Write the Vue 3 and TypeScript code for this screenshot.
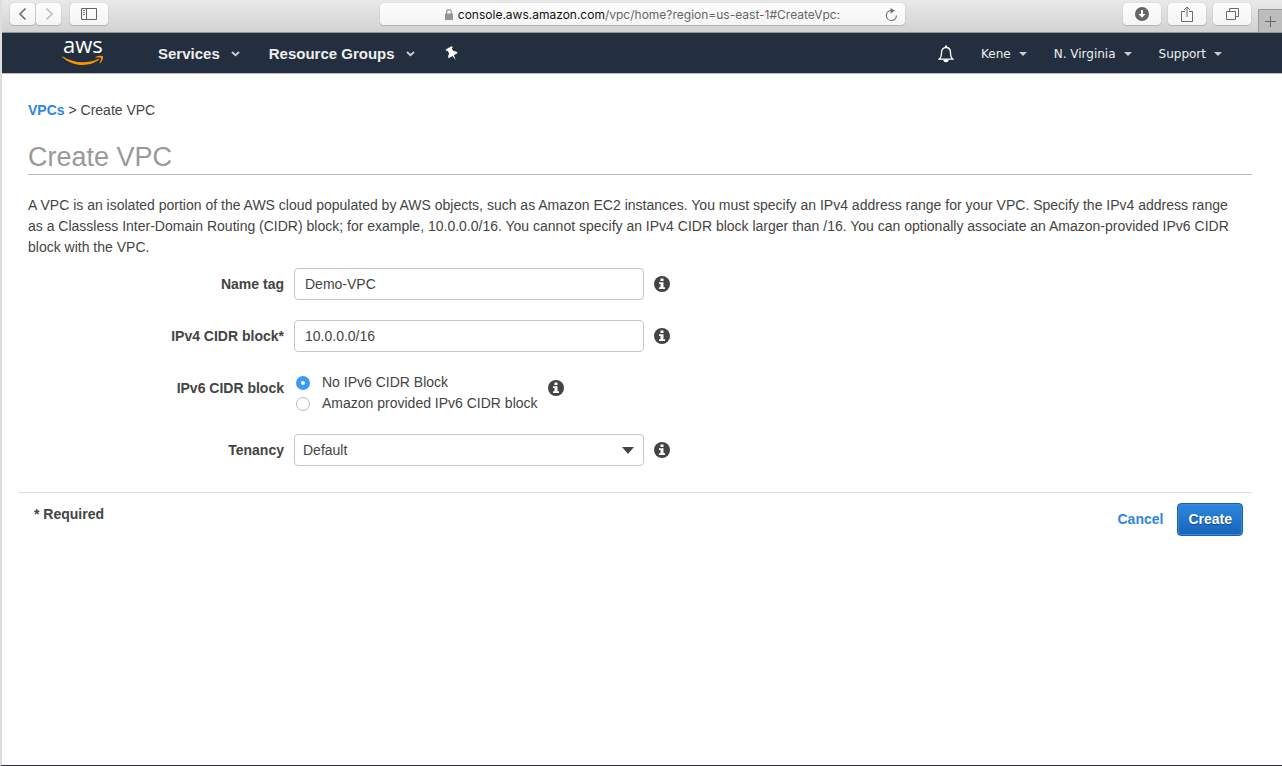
<script setup lang="ts">
import { ref } from 'vue'

interface NavItem {
  label: string
}

const leftMenus: NavItem[] = [{ label: 'Services' }, { label: 'Resource Groups' }]
const rightMenus: NavItem[] = [{ label: 'Kene' }, { label: 'N. Virginia' }, { label: 'Support' }]
const ipv6Options = [
  { value: 'none', label: 'No IPv6 CIDR Block' },
  { value: 'amazon', label: 'Amazon provided IPv6 CIDR block' },
]

const nameTag = ref('Demo-VPC')
const ipv4Block = ref('10.0.0.0/16')
const ipv6Mode = ref('none')
const tenancy = ref('Default')
</script>

<template>
  <div class="window">
    <header class="toolbar">
      <div class="tools">
        <div class="pair">
          <button class="tool small" type="button" aria-label="Back">
            <svg width="10" height="14" viewBox="0 0 10 14"><path d="M7.5 1.5 2 7l5.500 5.500" fill="none" stroke="#6b6b6b" stroke-width="1.600" /></svg>
          </button>
          <button class="tool small" type="button" aria-label="Forward">
            <svg width="10" height="14" viewBox="0 0 10 14"><path d="M2.500 1.500 8 7l-5.500 5.500" fill="none" stroke="#bdbdbd" stroke-width="1.600" /></svg>
          </button>
        </div>
        <button class="tool" type="button" aria-label="Sidebar">
          <svg width="16" height="12" viewBox="0 0 16 12">
            <path d="M.5.5h15v11H.5zM5.500.5v11" fill="none" stroke="#636363" />
            <path d="M2 2.500h2M2 4.500h2M2 6.500h2" stroke="#777" />
          </svg>
        </button>
      </div>
      <div class="address">
        <svg class="lock" width="8" height="11" viewBox="0 0 8 11">
          <path d="M0 4.500h8V11H0z" fill="#959595" />
          <path d="M1.600 5V3a2.400 2.400 0 0 1 4.800 0v2" fill="none" stroke="#959595" stroke-width="1.200" />
        </svg>
        <span class="url"><b>console.aws.amazon.com</b>/vpc/home?region=us-east-1#CreateVpc:</span>
        <button class="reload" type="button" aria-label="Reload">
          <svg width="13" height="14" viewBox="0 0 13 14">
            <path d="M7 2.500H6A5 5 0 1 0 11.400 7.500" fill="none" stroke="#737373" stroke-width="1.200" />
            <path d="M5.500 0 10 2.700 5.500 5.400z" fill="#737373" />
          </svg>
        </button>
      </div>
      <div class="tools end">
        <button class="tool" type="button" aria-label="Downloads">
          <svg width="14" height="14" viewBox="0 0 14 14">
            <circle cx="7" cy="7" r="7" fill="#666" />
            <path d="M6 3h2v4h2.500L7 10.800 3.500 7H6z" fill="#fff" />
          </svg>
        </button>
        <button class="tool" type="button" aria-label="Share">
          <svg width="12" height="16" viewBox="0 0 12 16">
            <path d="M4 5.500H.5v10h11v-10H8M6 11V1M3 4l3-3 3 3" fill="none" stroke="#6b6b6b" />
          </svg>
        </button>
        <button class="tool" type="button" aria-label="Show tabs">
          <svg width="13" height="12" viewBox="0 0 13 12">
            <path d="M.5 3.500h9v8h-9zM3.500 3V.5h9v8H10" fill="none" stroke="#6b6b6b" />
          </svg>
        </button>
        <button class="newtab" type="button" aria-label="New tab">
          <svg width="11" height="11" viewBox="0 0 11 11"><path d="M5.500 0v11M0 5.500h11" stroke="#666" /></svg>
        </button>
      </div>
    </header>

    <nav class="nav">
      <a class="logo" href="#" aria-label="AWS home">
        <svg width="42" height="48" viewBox="0 -10 42 48">
          <text x="1" y="14" class="word">aws</text>
          <path d="M.3 17.200C7 21.300 14 23.200 20.500 23.200c5.500 0 11-1.200 15.400-3.300.9-.4 1.500.5.8 1.200C32.600 24.300 26.500 26 20.700 26 12.900 26 5.600 22.900.2 17.900c-.5-.5-.3-.9.1-.7z" fill="#f79400" />
          <path d="M33.400 18.100c2.600-1.700 6.700-1.600 7.400-.9.700.9-.2 4.800-2.500 7-.5.4-.8.1-.6-.4.800-1.800 1.600-4.200 1.200-4.900-.6-.7-3.400-.5-5.200-.3-.5.100-.7-.2-.3-.5z" fill="#f79400" />
        </svg>
      </a>
      <button v-for="m in leftMenus" :key="m.label" class="menu bold" type="button">
        {{ m.label }}
        <svg width="9" height="6" viewBox="0 0 9 6"><path d="M1 1l3.500 3.300L8 1" fill="none" stroke="#ccc" stroke-width="1.900" /></svg>
      </button>
      <button class="icon pin" type="button" aria-label="Pin">
        <svg width="14" height="16" viewBox="0 0 14 16">
          <path transform="translate(7 7.500) rotate(-30)" d="M-3.500-6.500h7v2H2.300l.3 3.300C4.400-.3 5.200.8 5.200 2.400H.8L0 7.500-.8 2.400h-4.400c0-1.600.8-2.700 2.600-3.600l.3-3.300h-1.200z" fill="#fff" />
        </svg>
      </button>
      <div class="right">
        <button class="icon" type="button" aria-label="Notifications">
          <svg width="16" height="18" viewBox="0 0 16 18">
            <path d="M1 14.200c2.300-1.700 2.500-3.400 2.500-6.500 0-3.200 1.700-5.200 4.500-5.200s4.500 2 4.500 5.200c0 3.100.2 4.800 2.500 6.500z" fill="none" stroke="#fff" stroke-width="1.300" />
            <path d="M7 .6h2v2H7zM5.300 14.500h5.400a2.700 2.700 0 0 1-5.400 0z" fill="#fff" />
          </svg>
        </button>
        <button v-for="m in rightMenus" :key="m.label" class="menu" type="button">
          {{ m.label }}
          <svg width="8" height="4" viewBox="0 0 8 4"><path d="M0 0h8L4 4z" fill="#ccc" /></svg>
        </button>
      </div>
    </nav>

    <main class="page">
      <div class="crumbs"><a href="#">VPCs</a> &gt; Create VPC</div>
      <h1>Create VPC</h1>
      <p class="intro">
        A VPC is an isolated portion of the AWS cloud populated by AWS objects, such as Amazon EC2 instances. You must
        specify an IPv4 address range for your VPC. Specify the IPv4 address range as a Classless Inter-Domain Routing
        (CIDR) block; for example, 10.0.0.0/16. You cannot specify an IPv4 CIDR block larger than /16. You can
        optionally associate an Amazon-provided IPv6 CIDR block with the VPC.
      </p>

      <form @submit.prevent>
        <div class="row">
          <label class="name" for="name-tag">Name tag</label>
          <input id="name-tag" v-model="nameTag" class="field" type="text" />
          <svg class="info" viewBox="0 0 16 16"><circle cx="8" cy="8" r="8" /><path d="M6.500 2.500h3v2.400h-3zM5 6.300h4.500v5H11v1.800H5v-1.800h1.500V8.100H5z" /></svg>
        </div>
        <div class="row">
          <label class="name" for="ipv4-block">IPv4 CIDR block*</label>
          <input id="ipv4-block" v-model="ipv4Block" class="field" type="text" />
          <svg class="info" viewBox="0 0 16 16"><circle cx="8" cy="8" r="8" /><path d="M6.500 2.500h3v2.400h-3zM5 6.300h4.500v5H11v1.800H5v-1.800h1.500V8.100H5z" /></svg>
        </div>
        <div class="row" role="radiogroup" aria-labelledby="ipv6-name">
          <span id="ipv6-name" class="name">IPv6 CIDR block</span>
          <div class="choices">
            <label v-for="o in ipv6Options" :key="o.value" class="choice">
              <input v-model="ipv6Mode" type="radio" name="ipv6" :value="o.value" />
              {{ o.label }}
            </label>
          </div>
          <svg class="info" viewBox="0 0 16 16"><circle cx="8" cy="8" r="8" /><path d="M6.500 2.500h3v2.400h-3zM5 6.300h4.500v5H11v1.800H5v-1.800h1.500V8.100H5z" /></svg>
        </div>
        <div class="row">
          <label class="name" for="tenancy">Tenancy</label>
          <div class="selectbox">
            <select id="tenancy" v-model="tenancy" class="field">
              <option>Default</option>
              <option>Dedicated</option>
            </select>
            <svg class="arrow" width="12" height="7" viewBox="0 0 12 7"><path d="M0 0h12L6 7z" fill="#444" /></svg>
          </div>
          <svg class="info" viewBox="0 0 16 16"><circle cx="8" cy="8" r="8" /><path d="M6.500 2.500h3v2.400h-3zM5 6.300h4.500v5H11v1.800H5v-1.800h1.500V8.100H5z" /></svg>
        </div>

        <footer class="actions">
          <span class="required">* Required</span>
          <div class="buttons">
            <a href="#">Cancel</a>
            <button class="create" type="submit">Create</button>
          </div>
        </footer>
      </form>
    </main>
  </div>
</template>

<style>
body {
  margin: 0;
  background: #fff;
}
</style>

<style scoped>
* {
  box-sizing: border-box;
}
.window {
  min-height: 100vh;
  border-left: 2px solid #dedede;
  border-bottom: 1px solid #2a2d3a;
  background: #fff;
  color: #444;
  font: 14px/21px "Liberation Sans", Arial, sans-serif;
  display: flex;
  flex-direction: column;
}
button {
  font: inherit;
  color: inherit;
  padding: 0;
  border: 0;
  background: none;
}
svg {
  display: block;
  flex: none;
}
a {
  color: #2e86de;
  font-weight: bold;
  text-decoration: none;
}

.toolbar {
  height: 33px;
  display: grid;
  grid-template-columns: 1fr minmax(0, 525px) 1fr;
  background: linear-gradient(#e9e9e9, #d2d2d2);
  border-bottom: 1px solid #939393;
}
.tools {
  display: flex;
  gap: 9px;
  padding: 3px 0 0 8px;
}
.pair {
  display: flex;
  gap: 1px;
}
.tool {
  width: 38px;
  height: 22px;
  display: flex;
  align-items: center;
  justify-content: center;
  border-radius: 4px;
  background: linear-gradient(#fefefe, #f4f4f4);
  box-shadow: 0 0 1px #999, 0 1px 1px #b5b5b5;
}
.tool.small {
  width: 25px;
}
.tools.end {
  justify-content: flex-end;
  gap: 7px;
}
.newtab {
  width: 24px;
  margin-top: 6px;
  border: 1px solid #999;
  border-width: 1px 0 0 1px;
  background: #bdbdbd;
  display: flex;
  align-items: center;
  justify-content: center;
}
.address {
  height: 22px;
  margin-top: 3px;
  padding: 1px 6px 0 20px;
  display: flex;
  align-items: center;
  border-radius: 4px;
  background: linear-gradient(#fefefe, #f4f4f4);
  box-shadow: 0 0 1px #999, 0 1px 1px #b5b5b5;
}
.lock {
  margin-left: auto;
}
.url {
  margin: 0 auto 0 5px;
  font: 12px/22px Inter, Roboto, sans-serif;
  color: #666;
  white-space: nowrap;
}
.url b {
  font-weight: normal;
  color: #111;
}

.nav {
  height: 41px;
  padding: 2px 60px 0 60px;
  display: flex;
  align-items: center;
  background: #232f3e;
  border-bottom: 1px solid #b8bcc1;
  color: #eee;
}
.logo {
  margin: -6px 54px -4px 0;
}
.word {
  font: 500 22px "Open Sans", sans-serif;
  fill: #fff;
}
.menu {
  display: flex;
  align-items: center;
  gap: 8px;
  font: 12px/20px "DejaVu Sans", Verdana, sans-serif;
  white-space: nowrap;
}
.menu.bold {
  gap: 11px;
  margin-right: 29px;
  font: bold 15px/20px "Liberation Sans", Arial, sans-serif;
}
.pin {
  margin-left: 1px;
}
.right {
  margin-left: auto;
  display: flex;
  align-items: center;
  gap: 27px;
}

.page {
  padding: 26px 30px 0 26px;
}
h1 {
  margin: 21px 0 0;
  padding-bottom: 1px;
  border-bottom: 1px solid #bbb;
  color: #999;
  font-size: 27px;
  font-weight: normal;
  line-height: 31px;
}
.intro {
  margin: 20px 0 10px;
  padding-right: 10px;
}
.row {
  display: flex;
  align-items: flex-start;
  gap: 10px;
  min-height: 32px;
  margin-bottom: 20px;
}
.name {
  width: 256px;
  line-height: 32px;
  text-align: right;
  font-weight: bold;
}
.field {
  display: block;
  width: 350px;
  height: 32px;
  padding: 0 10px;
  border: 1px solid #c8c8c8;
  border-radius: 4px;
  background: #fff;
  color: #444;
  font: inherit;
  outline: none;
}
.info {
  width: 16px;
  height: 16px;
  margin-top: 8px;
  fill: #444;
}
.info path {
  fill: #fff;
}
.choices {
  display: flex;
  flex-direction: column;
}
.choice {
  display: flex;
  align-items: center;
  gap: 12px;
}
.choice input {
  appearance: none;
  width: 14px;
  height: 14px;
  margin: 0 0 0 2px;
  border: 1px solid #bbb;
  border-radius: 50%;
  background: #fff;
}
.choice input:checked {
  border: 5px solid #3b99fc;
}
.selectbox {
  display: grid;
  align-items: center;
}
.selectbox > * {
  grid-area: 1 / 1;
}
select.field {
  appearance: none;
  padding: 0 8px;
}
.arrow {
  justify-self: end;
  margin-right: 10px;
  pointer-events: none;
}
.actions {
  display: flex;
  justify-content: space-between;
  margin: 26px 0 0 -9px;
  padding: 10px 9px 0 15px;
  border-top: 1px solid #ddd;
}
.required {
  padding-top: 1px;
  font-weight: bold;
}
.buttons {
  display: flex;
  align-items: center;
  gap: 14px;
}
.create {
  height: 33px;
  padding: 0 10px;
  border: 1px solid #1e5fae;
  border-radius: 4px;
  background: linear-gradient(#2e86de, #1664ba);
  box-shadow: inset 0 0 0 1px #3c88d4;
  color: #fff;
  font-weight: bold;
  text-shadow: 0 1px 1px #14488a;
}
</style>
